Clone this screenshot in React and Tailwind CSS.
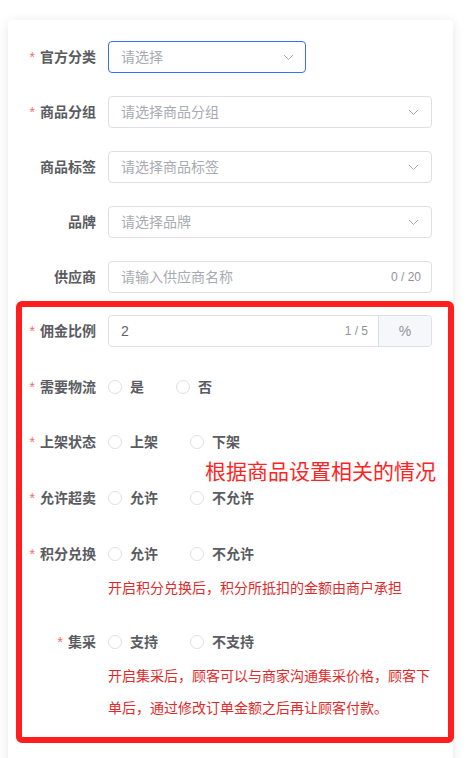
import React from "react";

const font = "font-['Liberation_Sans','Noto_Sans_CJK_SC',sans-serif]";

function Chevron() {
  return (
    <svg width="11" height="7" viewBox="0 0 11 7" fill="none">
      <path d="M1 1l4.5 4.5L10 1" stroke="#a8abb2" strokeWidth="1" />
    </svg>
  );
}

function Select({ placeholder, focused }) {
  return (
    <div
      className={
        focused
          ? "flex h-8 w-[198px] items-center justify-between rounded border border-[#3b6ef5] bg-white pl-3 pr-[11px]"
          : "flex h-8 w-full items-center justify-between rounded border border-[#dcdfe6] bg-white pl-3 pr-3"
      }
    >
      <span className="text-sm text-[#a8abb2]">{placeholder}</span>
      <Chevron />
    </div>
  );
}

function Row({ label, required, className, children }) {
  return (
    <div className={"flex " + (className || "")}>
      <div className="flex h-8 w-[100px] shrink-0 items-center justify-end pr-3 text-sm font-bold text-[#5a5c61]">
        {required && <span className="mr-[5px] font-normal text-[#f56c6c]">*</span>}
        {label}
      </div>
      <div className="min-w-0 flex-1">{children}</div>
    </div>
  );
}

function Radios({ options }) {
  return (
    <div className="flex h-8 items-center">
      {options.map((o) => (
        <label key={o} className="mr-8 flex items-center">
          <span className="h-[14px] w-[14px] rounded-full border border-[#dcdfe6] bg-white" />
          <span className="ml-2 text-sm font-bold text-[#5a5c61]">{o}</span>
        </label>
      ))}
    </div>
  );
}

function Tip({ children }) {
  return (
    <div className="mt-[2px] w-[324px] text-sm leading-8 text-[#df2a2a]">
      {children}
    </div>
  );
}

export default function App() {
  return (
    <div className={"min-h-[758px] overflow-hidden bg-white pt-5 " + font}>
      <div className="ml-2 w-[445px] rounded bg-white pb-10 pr-[21px] pt-[21px] shadow-[0_2px_12px_rgba(0,0,0,0.1)]">
        <Row label="官方分类" required className="mb-[23px]">
          <Select placeholder="请选择" focused />
        </Row>
        <Row label="商品分组" required className="mb-[23px]">
          <Select placeholder="请选择商品分组" />
        </Row>
        <Row label="商品标签" className="mb-[23px]">
          <Select placeholder="请选择商品标签" />
        </Row>
        <Row label="品牌" className="mb-[23px]">
          <Select placeholder="请选择品牌" />
        </Row>
        <Row label="供应商" className="mb-[22px]">
          <div className="flex h-8 w-full items-center justify-between rounded border border-[#dcdfe6] pl-3 pr-[10px]">
            <span className="text-sm text-[#a8abb2]">请输入供应商名称</span>
            <span className="text-xs text-[#909399]">0 / 20</span>
          </div>
        </Row>

        <div className="relative">
          <Row label="佣金比例" required className="mb-[24px]">
            <div className="flex h-8 w-full rounded border border-[#dcdfe6]">
              <div className="flex flex-1 items-center pl-3 pr-[10px]">
                <span className="flex-1 text-sm text-[#606266]">2</span>
                <span className="text-xs text-[#909399]">1 / 5</span>
              </div>
              <div className="flex w-[53px] items-center justify-center rounded-r border-l border-[#dcdfe6] bg-[#f5f7fa] text-sm text-[#909399]">
                %
              </div>
            </div>
          </Row>
          <Row label="需要物流" required className="mb-[23px]">
            <Radios options={["是", "否"]} />
          </Row>
          <Row label="上架状态" required className="mb-[24px]">
            <Radios options={["上架", "下架"]} />
          </Row>
          <Row label="允许超卖" required className="mb-[24px]">
            <Radios options={["允许", "不允许"]} />
          </Row>
          <Row label="积分兑换" required className="mb-[22px]">
            <Radios options={["允许", "不允许"]} />
            <Tip>开启积分兑换后，积分所抵扣的金额由商户承担</Tip>
          </Row>
          <Row label="集采" required>
            <Radios options={["支持", "不支持"]} />
            <Tip>开启集采后，顾客可以与商家沟通集采价格，顾客下单后，通过修改订单金额之后再让顾客付款。</Tip>
          </Row>

          <div className="pointer-events-none absolute -bottom-[19px] -right-[22px] -top-[14px] left-2 rounded-md border-[6px] border-[#ff1e1e]" />
          <div className="pointer-events-none absolute left-[197px] top-[146px] whitespace-nowrap text-[21px] leading-[21px] text-[#ff2424]">
            根据商品设置相关的情况
          </div>
        </div>
      </div>
    </div>
  );
}
